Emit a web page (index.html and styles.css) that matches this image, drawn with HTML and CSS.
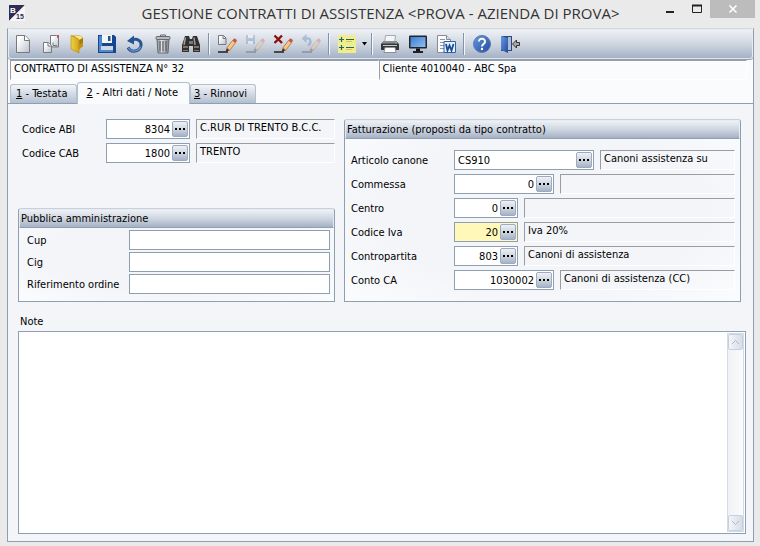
FILE: index.html
```html
<!DOCTYPE html>
<html lang="it">
<head>
<meta charset="utf-8">
<title>Gestione contratti di assistenza</title>
<link rel="stylesheet" href="styles.css">
</head>
<body>
<svg class="defs" aria-hidden="true">
  <defs>
    <linearGradient id="paper" x1="0" y1="0" x2="1" y2="1"><stop offset=".2" stop-color="#fff"/><stop offset="1" stop-color="#bcc1c9"/></linearGradient>
    <linearGradient id="gold" x1="0" y1="0" x2="1" y2="0"><stop offset="0" stop-color="#f0d040"/><stop offset="1" stop-color="#d3a51c"/></linearGradient>
    <linearGradient id="blue" x1="0" y1="0" x2="1" y2="1"><stop offset="0" stop-color="#6a9be0"/><stop offset="1" stop-color="#23489c"/></linearGradient>
    <linearGradient id="metal" x1="0" y1="0" x2="1" y2="0"><stop offset="0" stop-color="#8b8f94"/><stop offset=".4" stop-color="#e4e6e8"/><stop offset="1" stop-color="#7c8086"/></linearGradient>
    <linearGradient id="screen" x1="0" y1="0" x2="1" y2="1"><stop offset="0" stop-color="#3d7cd0"/><stop offset="1" stop-color="#8cc0f5"/></linearGradient>
    <g id="pencil">
      <path d="M1 18h10" stroke="#1c1414" stroke-width="1.400" fill="none"/>
      <path d="M8.500 18l1.300-4 3 2.200z" fill="#4a3020"/>
      <path d="M9.800 14l5.700-7.500 3 2.200-5.700 7.500z" fill="#f6c885" stroke="#a9703a" stroke-width=".8"/>
      <path d="M15.500 6.500l1.500-2q2-.2 3 2.200l-1.500 2z" fill="#cc5547"/>
    </g>
  </defs>
</svg>

<header class="titlebar">
  <svg class="logo" viewBox="0 0 16 16" aria-hidden="true">
    <path d="M0 0h16L0 16z" fill="#2f2d55"/><path d="M16 0v16H0z" fill="#f6f6f8"/>
    <text x="1" y="8" class="logo-b">B</text><text x="7" y="14" class="logo-n">15</text>
  </svg>
  <h1>GESTIONE CONTRATTI DI ASSISTENZA &lt;PROVA - AZIENDA DI PROVA&gt;</h1>
  <div class="window-buttons">
    <button aria-label="Riduci a icona"><svg width="10" height="10"><path d="M1 8h8" stroke="#222" stroke-width="2"/></svg></button>
    <button aria-label="Ingrandisci"><svg width="10" height="10"><path d="M.5 1v7.500h9V1" stroke="#222" fill="none"/><path d="M0 1.500h10" stroke="#222" stroke-width="2"/></svg></button>
    <button class="close" aria-label="Chiudi"><svg width="10" height="10"><path d="M1.500 1.500l7 7M8.500 1.500l-7 7" stroke="#fff" stroke-width="1.600"/></svg></button>
  </div>
</header>

<main class="frame">
  <nav class="toolbar" aria-label="Comandi">
    <button aria-label="Nuovo"><svg viewBox="0 0 20 20"><path d="M3.500 1.500h8.500l4.500 4.500v12.500h-13z" fill="url(#paper)" stroke="#747982"/><path d="M11.500 1.500V6.500h5" fill="#fff" stroke="#747982"/></svg></button>
    <button aria-label="Duplica"><svg viewBox="0 0 20 20"><path d="M9.500 1.500h6l2 2v9.500h-8z" fill="url(#paper)" stroke="#747982"/><path d="M12 8.500v3h4" fill="none" stroke="#747982"/><path d="M2.500 8.500h5l3 3v7h-8z" fill="url(#paper)" stroke="#747982"/><path d="M7 8.500V12h3.500" fill="#fff" stroke="#747982"/><path d="M16 1h2v3h-2z" fill="#c7525c"/></svg></button>
    <button aria-label="Apri"><svg viewBox="0 0 20 20"><path d="M2 1.500h9l3 2v9l-4 3z" fill="#c39716"/><path d="M5 2h6.500l2.500 2-3.500 2z" fill="#f8e48c"/><path d="M2 1.500l8 4v13.500l-8-4z" fill="url(#gold)" stroke="#b5890f" stroke-width=".6"/><path d="M10.500 6l3.500-2v4l-3.500 3z" fill="#a77c0a"/></svg></button>
    <button aria-label="Salva"><svg viewBox="0 0 20 20"><path d="M1 1h16l2 2v16H1z" fill="#17458f"/><path d="M2 2h3v16H2z" fill="#4b88cf"/><path d="M5 1h10v8H5z" fill="#f3f6f9"/><path d="M11 2h2.500v5H11z" fill="#24548f"/><path d="M4 12h12v6H4z" fill="#cbd8e6"/><path d="M4 16h12v2H4z" fill="#5488c7"/></svg></button>
    <button aria-label="Annulla"><svg viewBox="0 0 20 20"><path d="M6.500 6.300C12 3.500 16.800 7 16 11.500 15 17.500 6 19.500 3 13.500" fill="none" stroke="#285494" stroke-width="3"/><path d="M9 1.500v9L2 7z" fill="#285494"/><path d="M3.500 14c3 5 10.500 3.500 12-1.500" fill="none" stroke="#7198c9" stroke-width="1.200"/></svg></button>
    <button aria-label="Elimina"><svg viewBox="0 0 20 20"><path d="M4 5.500h12l-1 13.500H5z" fill="url(#metal)" stroke="#666b70"/><path d="M7 7v10.500M10 7v10.500M13 7v10.500" stroke="#555a60" stroke-width="1.200"/><rect x="3" y="2.500" width="14" height="3" rx="1" fill="#b7babe" stroke="#66696d"/><path d="M7.500 2V1h5v1" fill="none" stroke="#666"/></svg></button>
    <button aria-label="Cerca"><svg viewBox="0 0 20 20"><path d="M4 2h4l1 3h2l1-3h4l3 9v7h-7v-6H8v6H1v-7z" fill="#303030"/><path d="M4.500 3.500L3 11M13 3.500l1 7.500" stroke="#9b9b9b" stroke-width="1.500"/><path d="M2 13h5M13 13h5" stroke="#7d7466" stroke-width="2"/><path d="M8 7h4v3H8z" fill="#777"/><path d="M2 16.500h5M13 16.500h5" stroke="#85785f"/></svg></button>
    <span class="separator"></span>
    <button aria-label="Modifica riga"><svg viewBox="0 0 20 20"><path d="M1.500 1.500h5L9 4v6.500H1.500z" fill="url(#paper)" stroke="#747982"/><path d="M6 1.500v3h3" fill="none" stroke="#747982"/><use href="#pencil"/></svg></button>
    <button aria-label="Salva riga" disabled><svg viewBox="0 0 20 20"><path d="M1 1h9v9H1z" fill="#5580b8"/><path d="M3 1h5v3H3zM3 7h5v3H3z" fill="#fff"/><use href="#pencil"/></svg></button>
    <button aria-label="Elimina riga"><svg viewBox="0 0 20 20"><path d="M1.500 1.500l7.500 7.500M9 1.500L1.500 9" stroke="#8b1010" stroke-width="2.400"/><use href="#pencil"/></svg></button>
    <button aria-label="Annulla riga" disabled><svg viewBox="0 0 20 20"><path d="M4 4.500c6-1.500 7 4 3 7" fill="none" stroke="#3d6fae" stroke-width="2.400"/><path d="M5.500 0v9L.5 4.500z" fill="#3d6fae"/><use href="#pencil"/></svg></button>
    <span class="separator"></span>
    <button aria-label="Elenco"><svg viewBox="0 0 20 20"><path d="M1 1h18v18H1z" fill="#f2ed8c"/><path d="M2 5.500h5M4.500 3v5M2 13.500h5M4.500 11v5" stroke="#176b70" stroke-width="1.200"/><path d="M9 5.500h8M9 13.500h8" stroke="#176b70" stroke-width="1.200"/><path d="M9 7.500h6M9 15.500h6" stroke="#cfc66a"/></svg></button>
    <button class="drop" aria-label="Altre opzioni"><svg viewBox="0 0 7 4"><path d="M1 0h5L3.500 3.500z" fill="#000"/></svg></button>
    <span class="separator"></span>
    <button aria-label="Stampa"><svg viewBox="0 0 20 20"><path d="M5.500 1.500h10l-1 8h-10z" fill="#f4f5f6" stroke="#a6a9ad"/><path d="M4 7h12l3 3v6H1v-6z" fill="#35383b"/><path d="M4 7h12l2 2.500H2z" fill="#888d91"/><path d="M3 11.500h14" stroke="#c5c8ca"/><path d="M5 13.500h10l1 5H4z" fill="#fff" stroke="#8d9195"/><path d="M15 9h2" stroke="#6ac256"/></svg></button>
    <button aria-label="Anteprima"><svg viewBox="0 0 20 20"><rect x="1" y="1.500" width="18" height="13" rx="1" fill="#22262c"/><path d="M2.500 3h15v10h-15z" fill="url(#screen)"/><path d="M8 14.500h4V17H8z" fill="#111"/><path d="M5 18h10" stroke="#222" stroke-width="2"/></svg></button>
    <button aria-label="Esporta in Word"><svg viewBox="0 0 20 20"><path d="M1.500 1.500h9l4 4v13h-13z" fill="#fafafa" stroke="#858b93"/><path d="M10.500 1.500v4h4" fill="#ddd" stroke="#858b93"/><path d="M4 5.500h5M4 8.500h6M4 11.500h4M4 14.500h4" stroke="#8b96a5"/><path d="M8 7.500h11.500v11H8z" fill="#e8f0fa" stroke="#2d62a8"/><path d="M10 10l1.500 6.500 2-5 2 5 2-6.500" fill="none" stroke="#174d9b" stroke-width="1.800"/></svg></button>
    <span class="separator"></span>
    <button aria-label="Aiuto"><svg viewBox="0 0 20 20"><circle cx="10" cy="10" r="8.500" fill="url(#blue)" stroke="#547bc0"/><path d="M7 7.500C7 3.500 13.500 4 13 8c-.3 2-3 2-3 4.500" fill="none" stroke="#fff" stroke-width="1.900"/><circle cx="10" cy="15" r="1.200" fill="#fff"/></svg></button>
    <button aria-label="Esci"><svg viewBox="0 0 20 20"><path d="M1 2h11v15H1z" fill="#264983"/><path d="M8 3h3v13H8z" fill="#aebdd2"/><path d="M1 2l7 2v15l-7-3z" fill="url(#blue)"/><path d="M12.500 10l4-4v2.500h3v3h-3V14z" fill="#aaa" stroke="#333"/></svg></button>
  </nav>

  <div class="summary">
    <output class="sunken">CONTRATTO DI ASSISTENZA N° 32</output>
    <output class="sunken">Cliente 4010040 - ABC Spa</output>
  </div>

  <div class="tabs" role="tablist">
    <button class="tab" role="tab"><u>1</u> - Testata</button>
    <button class="tab active" role="tab" aria-selected="true"><u>2</u> - Altri dati / Note</button>
    <button class="tab" role="tab"><u>3</u> - Rinnovi</button>
  </div>

  <form class="panel">
    <div class="columns">
      <div class="left">
        <div class="bank">
          <div class="row"><label for="abi">Codice ABI</label><span class="lookup w84"><input id="abi" value="8304"><button type="button" aria-label="Cerca ABI"></button></span><output class="sunken" for="abi">C.RUR DI TRENTO B.C.C.</output></div>
          <div class="row"><label for="cab">Codice CAB</label><span class="lookup w84"><input id="cab" value="1800"><button type="button" aria-label="Cerca CAB"></button></span><output class="sunken" for="cab">TRENTO</output></div>
        </div>
        <section class="group admin">
          <h2>Pubblica amministrazione</h2>
          <div class="rows">
            <div class="row"><label for="cup">Cup</label><input class="text" id="cup"></div>
            <div class="row"><label for="cig">Cig</label><input class="text" id="cig"></div>
            <div class="row"><label for="rif">Riferimento ordine</label><input class="text" id="rif"></div>
          </div>
        </section>
      </div>
      <section class="group billing">
        <h2>Fatturazione (proposti da tipo contratto)</h2>
        <div class="rows">
          <div class="row"><label for="art">Articolo canone</label><span class="lookup w140 start"><input id="art" value="CS910"><button type="button" aria-label="Cerca articolo"></button></span><output class="sunken" for="art">Canoni assistenza su</output></div>
          <div class="row"><label for="com">Commessa</label><span class="lookup w100"><input id="com" value="0"><button type="button" aria-label="Cerca commessa"></button></span><output class="sunken" for="com"></output></div>
          <div class="row"><label for="cen">Centro</label><span class="lookup w64"><input id="cen" value="0"><button type="button" aria-label="Cerca centro"></button></span><output class="sunken" for="cen"></output></div>
          <div class="row"><label for="iva">Codice Iva</label><span class="lookup w64 focus"><input id="iva" value="20"><button type="button" aria-label="Cerca codice Iva"></button></span><output class="sunken" for="iva">Iva 20%</output></div>
          <div class="row"><label for="con">Contropartita</label><span class="lookup w64"><input id="con" value="803"><button type="button" aria-label="Cerca contropartita"></button></span><output class="sunken" for="con">Canoni di assistenza</output></div>
          <div class="row"><label for="cca">Conto CA</label><span class="lookup w100"><input id="cca" value="1030002"><button type="button" aria-label="Cerca conto CA"></button></span><output class="sunken" for="cca">Canoni di assistenza (CC)</output></div>
        </div>
      </section>
    </div>
    <label class="note-label" for="note">Note</label>
    <div class="note">
      <textarea id="note"></textarea>
      <div class="scroll">
        <button type="button" aria-label="Scorri su"><svg width="9" height="6"><path d="M1 5l3.500-3.500L8 5" fill="none" stroke="#adb8c8"/></svg></button>
        <button type="button" aria-label="Scorri giù"><svg width="9" height="6"><path d="M1 1l3.500 3.500L8 1" fill="none" stroke="#adb8c8"/></svg></button>
      </div>
    </div>
  </form>
</main>
</body>
</html>
```
FILE: styles.css
```css
:root {
  --line: #8f9fb2;
  --bar: linear-gradient(#eef1f5, #cfd6e0 50%, #a5b1c5);
}

* { box-sizing: border-box; }

body {
  margin: 0;
  min-height: 100vh;
  display: flex;
  flex-direction: column;
  background: #eaeaea;
  color: #000;
  font: 11px/14px "DejaVu Sans Condensed", "DejaVu Sans", sans-serif;
}

button, input, textarea { font: inherit; color: inherit; margin: 0; padding: 0; border: 0; background: none; }
input, textarea { outline: 0; min-width: 0; }

.defs { position: absolute; width: 0; height: 0; }

.titlebar { display: flex; align-items: flex-start; height: 28px; padding: 0 5px 0 9px; }
.logo { width: 16px; height: 16px; margin-top: 5px; overflow: visible; }
.logo-b { font: bold 8px "Liberation Sans", sans-serif; fill: #fff; }
.logo-n { font: bold 7px "Liberation Sans", sans-serif; fill: #2f2d55; }
.titlebar h1 { flex: 1; margin: 0 0 0 80px; text-align: center; white-space: nowrap; font: 15px/27px "Open Sans", sans-serif; color: #333; }
.window-buttons { display: flex; }
.window-buttons button { width: 27px; height: 18px; display: grid; place-items: center; }
.window-buttons .close { width: 45px; background: #bcbcbc; }

.frame {
  flex: 1;
  display: flex;
  flex-direction: column;
  margin: 0 6px 4px 7px;
  border: 1px solid var(--line);
  border-top-color: #d5d9df;
  background: #f9fbfd;
}

.toolbar {
  display: flex;
  align-items: center;
  height: 29px;
  border: 1px solid #e6ebf2;
  border-bottom: 0;
  border-radius: 3px;
  background: var(--bar);
  box-shadow: 0 1px #dfe5ee, 0 2px var(--line);
}
.toolbar button { width: 28px; height: 28px; display: grid; place-items: center; }
.toolbar svg { width: 20px; height: 20px; }
.toolbar button:disabled { opacity: .3; }
.toolbar .drop { width: 7px; }
.toolbar .drop svg { width: 7px; height: 4px; }
.separator { width: 8px; height: 22px; background: linear-gradient(90deg, transparent 3px, #7f93ad 3px 4px, #f4f6f9 4px 5px, transparent 5px); }

.sunken {
  display: block;
  height: 20px;
  padding: 1px 3px;
  border: 1px solid #fff;
  border-top-color: #9a9ea4;
  border-left-color: #9a9ea4;
  white-space: nowrap;
  overflow: hidden;
}

.summary { display: grid; grid-template-columns: 1fr 1fr; margin: 2px 6px 2px 2px; }

.tabs { display: flex; align-items: flex-end; height: 21px; padding-left: 2px; }
.tab {
  height: 19px;
  padding: 0 9px 0 5px;
  border: 1px solid #b4c0d0;
  border-bottom: 0;
  border-radius: 3px 3px 0 0;
  background: linear-gradient(#f3f5f8, #b3bfd0);
}
.tab:last-child { padding: 0 8px 0 3px; }
.tab.active { height: 22px; margin-bottom: -1px; padding: 0 11px 2px 8px; background: #f9fbfd; z-index: 1; }

.panel { flex: 1; display: flex; flex-direction: column; padding: 15px 7px 7px 10px; border-top: 1px solid var(--line); background: #f3f5f8; }
.columns { display: grid; grid-template-columns: 317fr 397fr; gap: 9px; margin-right: 5px; }
.left { display: flex; flex-direction: column; justify-content: space-between; }

.row { display: flex; align-items: center; height: 20px; }
.row label { padding-top: 2px; }
.row .sunken { flex: 1; margin-left: 6px; }
.bank { display: grid; gap: 4px; }
.bank label { width: 88px; padding-left: 4px; }

.lookup { display: flex; height: 20px; padding: 1px; border: 1px solid var(--line); background: #fff; }
.lookup input { flex: 1; text-align: right; padding: 1px 2px 0; }
.lookup.start input { text-align: left; }
.lookup.focus { background: #fff8b8; }
.lookup button {
  width: 16px;
  border: 1px solid #9cabc0;
  border-radius: 2px;
  background: linear-gradient(#000, #000) 2px 50% / 2px 2px no-repeat, linear-gradient(#000, #000) 6px 50% / 2px 2px no-repeat, linear-gradient(#000, #000) 10px 50% / 2px 2px no-repeat, var(--bar);
}
.w64 { width: 64px; }
.w84 { width: 84px; }
.w100 { width: 100px; }
.w140 { width: 140px; }

.group { border: 1px solid var(--line); border-top-color: #c8d0dc; border-radius: 3px 3px 0 0; background: radial-gradient(#f3f5f8 60%, #fbfcfe); }
.group h2 { height: 19px; margin: 0; padding: 1px 1px; border: 1px solid #e6ebf2; border-bottom-color: var(--line); border-radius: 3px 3px 0 0; background: var(--bar); font: inherit; line-height: 16px; }
.rows { display: grid; }
.admin .rows { gap: 2px; padding: 2px 4px 7px 8px; }
.admin label { width: 102px; }
.text { flex: 1; height: 20px; padding: 0 3px; border: 1px solid var(--line); background: #fff; }
.billing .rows { gap: 4px; padding: 11px 5px 11px 6px; }
.billing label { width: 103px; }

.note-label { margin: 13px 0 2px 2px; }
.note { flex: 1; display: flex; border: 1px solid var(--line); background: #fff; padding: 1px; }
.note textarea { flex: 1; resize: none; }
.scroll { width: 17px; display: flex; flex-direction: column; justify-content: space-between; border: 1px solid #d3dae4; background: linear-gradient(90deg, #f0f2f5, #fafbfc); }
.scroll button { height: 16px; display: grid; place-items: center; border: 1px solid #c6d0de; border-radius: 2px; background: linear-gradient(90deg, #f3f5f8, #d6dde7); }
```
